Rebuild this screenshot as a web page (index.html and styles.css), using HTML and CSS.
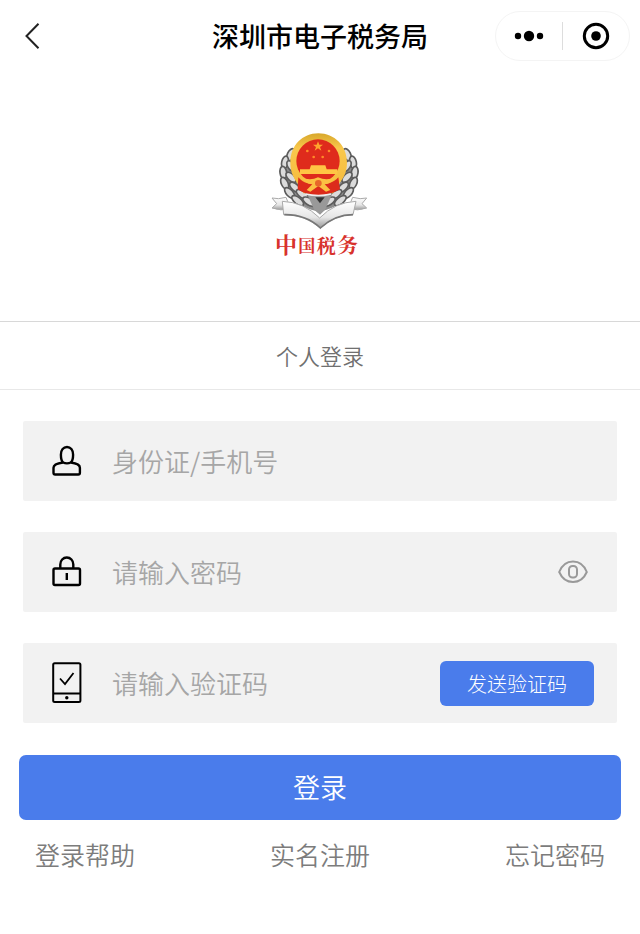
FILE: index.html
```html
<!DOCTYPE html>
<html lang="zh-CN">
<head>
<meta charset="utf-8">
<meta name="viewport" content="width=device-width, initial-scale=1">
<title>深圳市电子税务局</title>
<link rel="stylesheet" href="styles.css">
</head>
<body>
<header class="navbar">
  <button class="icon-button back" type="button" aria-label="返回">
    <svg width="16" height="28" viewBox="0 0 16 28"><path d="M14.500 1.800 2.500 14 14.500 26.200" fill="none" stroke="#222" stroke-width="2"/></svg>
  </button>
  <h1 class="title">深圳市电子税务局</h1>
  <div class="capsule">
    <button class="icon-button capsule-item" type="button" aria-label="更多">
      <svg width="30" height="12" viewBox="0 0 30 12"><circle cx="4" cy="6" r="3.200"/><circle cx="15" cy="6" r="5.200"/><circle cx="26" cy="6" r="3.200"/></svg>
    </button>
    <button class="icon-button capsule-item" type="button" aria-label="关闭">
      <svg width="28" height="28" viewBox="0 0 28 28"><circle cx="14" cy="14" r="11.700" fill="none" stroke="#000" stroke-width="3"/><circle cx="14" cy="14" r="4.800"/></svg>
    </button>
  </div>
</header>

<main>
  <div class="brand">
    <svg class="logo" width="130" height="150" viewBox="0 0 390 450" role="img" aria-label="中国税务">
      <defs>
        <linearGradient id="silver" x1="0" y1="0" x2="0" y2="1"><stop offset="0" stop-color="#fff"/><stop offset=".6" stop-color="#e6e6e6"/><stop offset="1" stop-color="#999"/></linearGradient>
        <linearGradient id="gold" x1="0" y1="0" x2="0" y2="1"><stop offset="0" stop-color="#d8a82c"/><stop offset=".25" stop-color="#f9c84c"/><stop offset="1" stop-color="#f5b93c"/></linearGradient>
        <g id="wreath">
          <path d="M118 84C84 112 70 164 90 207c18 36 54 58 94 66l8-40c-44-10-68-40-76-84Z" fill="#8c8c8c"/>
          <g fill="#dcdcdc" stroke="#5c5c5c" stroke-width="5">
            <ellipse cx="108" cy="104" rx="11" ry="19" transform="rotate(25 108 104)"/>
            <ellipse cx="90" cy="127" rx="10" ry="19" transform="rotate(12 90 127)"/>
            <ellipse cx="109" cy="139" rx="10" ry="19" transform="rotate(-35 109 139)"/>
            <ellipse cx="85" cy="158" rx="10" ry="19" transform="rotate(-8 85 158)"/>
            <ellipse cx="108" cy="172" rx="10" ry="19" transform="rotate(-45 108 172)"/>
            <ellipse cx="89" cy="190" rx="10" ry="19" transform="rotate(-25 89 190)"/>
            <ellipse cx="120" cy="202" rx="10" ry="20" transform="rotate(-48 120 202)"/>
            <ellipse cx="104" cy="219" rx="10" ry="20" transform="rotate(-42 104 219)"/>
            <ellipse cx="142" cy="223" rx="10" ry="21" transform="rotate(-55 142 223)"/>
            <ellipse cx="128" cy="242" rx="10" ry="21" transform="rotate(-52 128 242)"/>
            <ellipse cx="162" cy="245" rx="10" ry="21" transform="rotate(-58 162 245)"/>
          </g>
        </g>
      </defs>
      <use href="#wreath"/>
      <use href="#wreath" transform="matrix(-1 0 0 1 384 0)"/>
      <path d="M51 234q18 5 42-2l14 34q-30 8-56-2l14-13Z" fill="url(#silver)" stroke="#aaa" stroke-width="3"/>
      <path d="M335 234q-18 5-42-2l-14 34q30 8 56-2l-14-13Z" fill="url(#silver)" stroke="#aaa" stroke-width="3"/>
      <path d="M82 244q64 2 112 50 45-47 109-50l-9 40q-54 0-98 40-45-40-110-40Z" fill="url(#silver)" stroke="#aaa" stroke-width="3"/>
      <path d="M88 284q65-1 108 40 44-40 98-40" fill="none" stroke="#777" stroke-width="5"/>
      <path d="M158 226h72l-20 44-15 14-17-14Z" fill="#999"/>
      <path d="M181 232h28l-14 18Z" fill="#333"/>
      <path d="M190 40c48 0 86 37 86 88 0 32-14 54-33 72l-8 20H145l-8-20c-18-18-31-42-31-72 0-51 36-88 84-88Z" fill="url(#gold)"/>
      <circle cx="189" cy="123" r="65" fill="#df2b1c"/>
      <path d="M130 172c15 19 35 20 59 20s47-2 61-20l5 36q-31 18-66 18t-61-18Z" fill="#dc2b1b"/>
      <path d="m189 64 4 10h11l-9 7 4 11-10-7-10 7 4-11-9-7h11Z" fill="#ffa42e"/>
      <g fill="#ff8a28"><circle cx="157" cy="93" r="4"/><circle cx="222" cy="93" r="4"/><circle cx="176" cy="111" r="4"/><circle cx="203" cy="111" r="4"/></g>
      <path d="M168 136h43l4 12h32v14H135v-14h29Z" fill="#ffc544"/>
      <path d="M137 170q26 14 52 2 28 12 54-2-12 22-34 23l17 17-13 5-23-17-24 17-11-5 17-17q-24-2-35-23Z" fill="#fbc143"/>
      <circle cx="190" cy="190" r="10" fill="#e7682a"/>
      <path d="M151 222q39 9 78 0" fill="none" stroke="#eee" stroke-width="5"/>
      <g class="logo-name"><text x="60" y="400" font-size="66">中</text><text x="130" y="395" font-size="51">国</text><text x="185" y="399" font-size="57">税</text><text x="247" y="399" font-size="62">务</text></g>
    </svg>
  </div>

  <h2 class="tab">个人登录</h2>

  <form class="login">
    <div class="fields">
      <div class="field">
        <label for="account" aria-label="身份证/手机号">
          <svg width="30" height="42" viewBox="0 0 30 42"><g fill="none" stroke="#000" stroke-width="2.400" stroke-linejoin="round"><path d="M11 22.500C9.300 20.800 8.900 18.500 8.900 14.800 8.900 10 11.500 7 15 7s6.100 3 6.100 7.800c0 3.700-.5 6-2.200 7.700"/><path d="M11 22.500C7 23 1.500 24.600 1.500 27.800v5q0 1.700 1.700 1.700h23q1.700 0 1.700-1.700v-5c0-3.200-5-4.800-9-5.300Q15 24.300 11 22.500Z"/></g></svg>
        </label>
        <input id="account" type="text" placeholder="身份证/手机号">
      </div>
      <div class="field">
        <label for="password" aria-label="请输入密码">
          <svg width="30" height="42" viewBox="0 0 30 42"><g fill="none" stroke="#000" stroke-width="2.400"><rect x="1.500" y="17.500" width="26.500" height="16.500" rx="1.500"/><path d="M8.300 17.500v-4c0-4 2.800-7 6.500-7s6.500 3 6.500 7v4M14.800 22v7"/></g></svg>
        </label>
        <input id="password" type="password" placeholder="请输入密码">
        <button class="icon-button reveal" type="button" aria-label="显示密码">
          <svg width="30" height="24" viewBox="0 0 30 24"><g fill="none" stroke="#999" stroke-width="2"><path d="M1.200 12C4 5 9 1.500 15 1.500S26 5 28.800 12C26 18.500 21 22 15 22S4 18.500 1.200 12Z"/><rect x="11" y="6" width="8" height="11.500" rx="3.500"/></g></svg>
        </button>
      </div>
      <div class="field">
        <label for="code" aria-label="请输入验证码">
          <svg width="30" height="42" viewBox="0 0 30 42"><rect x="1.200" y="1.200" width="27.200" height="38.800" rx="1.500" fill="none" stroke="#000" stroke-width="2"/><path d="M1 31.500h27.500M8 16.500l5 5.500 8.500-11" fill="none" stroke="#000" stroke-width="1.800"/><circle cx="14.800" cy="35.800" r="1.700"/></svg>
        </label>
        <input id="code" type="text" placeholder="请输入验证码">
        <button class="send" type="button">发送验证码</button>
      </div>
    </div>
    <button class="submit" type="submit">登录</button>
    <nav class="links">
      <a href="#help">登录帮助</a>
      <a href="#register">实名注册</a>
      <a href="#forgot">忘记密码</a>
    </nav>
  </form>
</main>
</body>
</html>
```
FILE: styles.css
```css
* {
  box-sizing: border-box;
}

body {
  margin: 0;
  background: #fff;
  color: #000;
  font-family: "Noto Sans CJK SC", sans-serif;
  font-weight: 350;
}

button,
input {
  margin: 0;
  padding: 0;
  border: 0;
  background: none;
  font: inherit;
}

svg {
  display: block;
}

.icon-button {
  display: flex;
  align-items: center;
  justify-content: center;
}

.navbar {
  display: grid;
  grid-template-columns: 1fr auto 1fr;
  align-items: center;
  height: 72px;
  padding: 0 10px 0 24px;
}

.back {
  justify-self: start;
}

.title {
  margin: 0;
  padding-right: 14px;
  font-size: 27px;
  font-weight: 500;
  line-height: 40px;
}

.capsule {
  justify-self: end;
  display: flex;
  align-items: center;
  width: 135px;
  height: 50px;
  border: 1px solid #f4f4f4;
  border-radius: 25px;
}

.capsule-item {
  flex: 1;
  height: 28px;
}

.capsule-item + .capsule-item {
  border-left: 1px solid #ddd;
}

.brand {
  display: flex;
  justify-content: center;
  padding: 48px 0 51px;
}

.logo-name {
  fill: #d8322c;
  font-family: "Noto Serif CJK SC", "Noto Sans CJK SC", serif;
  font-weight: 700;
}

.tab {
  margin: 0;
  border-top: 1px solid #d8d8d8;
  border-bottom: 1px solid #e8e8e8;
  color: #707070;
  font-size: 22px;
  font-weight: 350;
  line-height: 67px;
  text-align: center;
}

.login {
  padding: 31px 19px;
}

.fields {
  display: grid;
  gap: 31px;
  padding: 0 4px;
}

.field {
  display: flex;
  align-items: center;
  height: 80px;
  padding: 0 23px 0 29px;
  border-radius: 2px;
  background: #f2f2f2;
}

.field input {
  flex: 1;
  min-width: 0;
  height: 60px;
  padding: 0 0 2px 30px;
  outline: 0;
  font-size: 26px;
}

.field input::placeholder {
  color: #a6a6a6;
  opacity: 1;
}

.reveal {
  width: 42px;
  height: 42px;
}

.send {
  width: 154px;
  height: 45px;
  border-radius: 6px;
  background: #4a7ceb;
  color: #fff;
  font-size: 20px;
  font-weight: 300;
}

.submit {
  width: 100%;
  height: 65px;
  margin-top: 32px;
  padding-bottom: 2px;
  border-radius: 7px;
  background: #4a7ceb;
  color: #fff;
  font-size: 27px;
}

.links {
  display: flex;
  justify-content: space-between;
  padding: 15px 16px 0;
  font-size: 25px;
  line-height: 38px;
}

.links a {
  color: #7c7c7c;
  text-decoration: none;
}
```
